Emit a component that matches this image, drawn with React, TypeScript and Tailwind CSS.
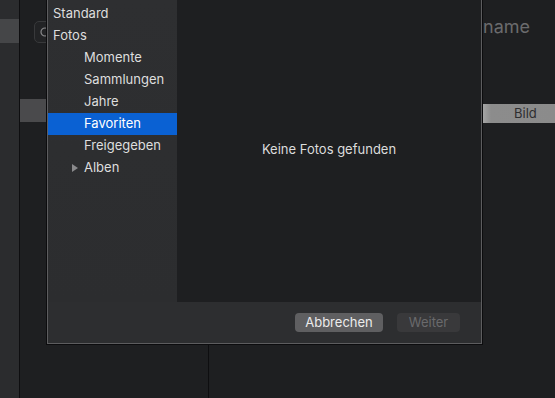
import React from "react";

const items: { label: string; indent: boolean; selected?: boolean; arrow?: boolean }[] = [
  { label: "Standard", indent: false },
  { label: "Fotos", indent: false },
  { label: "Momente", indent: true },
  { label: "Sammlungen", indent: true },
  { label: "Jahre", indent: true },
  { label: "Favoriten", indent: true, selected: true },
  { label: "Freigegeben", indent: true },
  { label: "Alben", indent: true, arrow: true },
];

export default function App() {
  return (
    <div className="relative flex h-[398px] w-[555px] overflow-hidden bg-[#1e1f21] font-['Inter','Noto_Sans',sans-serif] antialiased">
      {/* far-left strip */}
      <div className="flex w-[19px] flex-col bg-[#2b2c2e] pt-[19px]">
        <div className="h-[24px] bg-[#454648]" />
      </div>
      <div className="w-px bg-[#0e0e10]" />
      {/* background column A */}
      <div className="flex w-[189px] flex-col border-r border-[#0e0e10]">
        <div className="ml-[14px] mt-[21px] flex h-[22px] items-center rounded-[5px] border border-[#38393b] bg-[#222325] pl-[5px]">
          <svg width="10" height="10" viewBox="0 0 10 10" fill="none">
            <circle cx="5" cy="5" r="4" stroke="#8a8a8c" strokeWidth="1.2" />
          </svg>
        </div>
        <div className="mt-[56px] h-[23px] bg-[#4a4a4c]" />
      </div>
      {/* background column B */}
      <div className="flex flex-1 flex-col">
        <div className="mt-[15px] pl-[274px] text-[18px] leading-[24px] text-[#6b6b6d]">name</div>
        <div className="ml-[274px] mt-[65px] flex h-[19px] items-center bg-[linear-gradient(to_right,#a5a5a5,#8c8c8c_8px,#8b8b8b)] pl-[31px] text-[13px] text-[#2e2e30]">
          Bild
        </div>
      </div>

      {/* sheet dialog */}
      <div className="absolute left-[46px] top-0 h-[345px] w-[437px] border border-t-0 border-[#0c0c0e]">
        <div className="flex h-full w-full flex-col border border-t-0 border-[#5d5d5f] bg-[#2d2e30]">
          <div className="flex h-[302px]">
            <div className="flex w-[129px] flex-col bg-[linear-gradient(to_bottom,#2e2f31,#2c2d2f)] pt-[3px]">
              {items.map((it) => (
                <div
                  key={it.label}
                  className={
                    "flex h-[22px] items-center text-[13px] " +
                    (it.selected ? "bg-[#0a61d3] text-white " : "text-[#dedede] ") +
                    (it.indent ? "pl-[36px]" : "pl-[5px]")
                  }
                >
                  {it.arrow ? (
                    <span className="relative -ml-[12px] mr-[6px] h-0 w-0 border-y-[4.5px] border-l-[6px] border-y-transparent border-l-[#8a8a8c]" />
                  ) : null}
                  {it.label}
                </div>
              ))}
            </div>
            <div className="flex flex-1 items-center justify-center bg-[#1e1f21] pb-[2px] text-[13px] text-[#dcdcdc]">
              Keine Fotos gefunden
            </div>
          </div>
          <div className="flex flex-1 items-start justify-end gap-[14px] pr-[21px] pt-[11px]">
            <button className="flex h-[19px] w-[88px] items-center justify-center rounded-[4px] bg-[#5f5f61] text-[13px] text-[#ececec]">
              Abbrechen
            </button>
            <button className="flex h-[19px] w-[63px] items-center justify-center rounded-[4px] bg-[#39393b] text-[13px] text-[#6a6a6c]">
              Weiter
            </button>
          </div>
        </div>
      </div>
    </div>
  );
}
